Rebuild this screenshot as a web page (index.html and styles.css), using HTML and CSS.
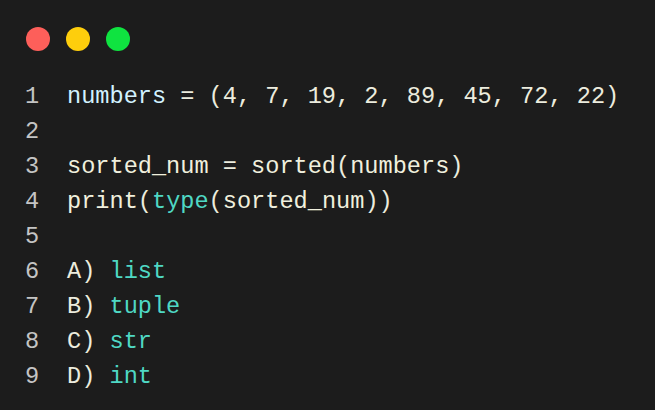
FILE: index.html
```html
<!DOCTYPE html>
<html>
<head>
<meta charset="utf-8">
<link rel="stylesheet" href="styles.css">
</head>
<body>
<div class="window">
  <div class="dots">
    <span class="dot red"></span>
    <span class="dot yellow"></span>
    <span class="dot green"></span>
  </div>
  <div class="code">
    <div class="line"><span class="ln">1</span><span class="src"><span class="var">numbers</span> = (4, 7, 19, 2, 89, 45, 72, 22)</span></div>
    <div class="line"><span class="ln">2</span><span class="src"></span></div>
    <div class="line"><span class="ln">3</span><span class="src"><span class="fn">sorted_num</span> = <span class="fn">sorted</span>(<span class="fn">numbers</span>)</span></div>
    <div class="line"><span class="ln">4</span><span class="src"><span class="fn">print</span>(<span class="kw">type</span>(<span class="fn">sorted_num</span>))</span></div>
    <div class="line"><span class="ln">5</span><span class="src"></span></div>
    <div class="line"><span class="ln">6</span><span class="src">A) <span class="kw">list</span></span></div>
    <div class="line"><span class="ln">7</span><span class="src">B) <span class="kw">tuple</span></span></div>
    <div class="line"><span class="ln">8</span><span class="src">C) <span class="kw">str</span></span></div>
    <div class="line"><span class="ln">9</span><span class="src">D) <span class="kw">int</span></span></div>
  </div>
</div>
</body>
</html>
```
FILE: styles.css
```css
html, body {
  margin: 0;
  padding: 0;
  background: #1c1c1c;
}
.window {
  width: 655px;
  height: 410px;
  background: #1c1c1c;
  box-sizing: border-box;
  padding: 27px 0 0 26px;
}
.dots {
  display: flex;
  gap: 16px;
}
.dot {
  width: 24px;
  height: 24px;
  border-radius: 50%;
  display: block;
}
.red { background: #fd5f5a; }
.yellow { background: #fece0c; }
.green { background: #0fe340; }
.code {
  margin-top: 28px;
  margin-left: -1px;
  font-family: "Liberation Mono", monospace;
  font-size: 23.6px;
  color: #ececde;
}
.line {
  display: flex;
  height: 35px;
  line-height: 35px;
  white-space: pre;
}
.ln {
  width: 42px;
  color: #c4c4c4;
}
.var { color: #d2f2ff; }
.fn { color: #f0f0de; }
.kw { color: #4fd8c4; }
```
